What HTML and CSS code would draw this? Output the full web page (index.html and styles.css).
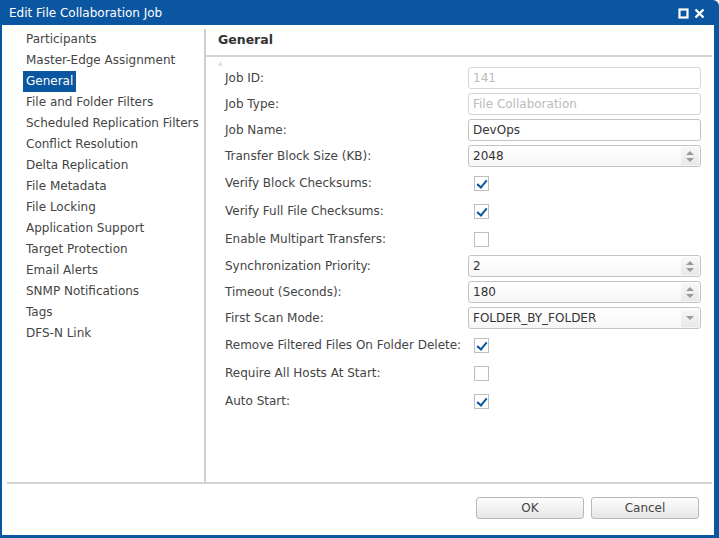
FILE: index.html
```html
<!DOCTYPE html>
<html lang="en">
<head>
    <meta charset="UTF-8">
    <title>Edit File Collaboration Job</title>
    <link rel="stylesheet" href="styles.css">
</head>
<body>
    <div class="window">
        <div class="titlebar">
            <span class="title">Edit File Collaboration Job</span>
            <span class="tools">
                <svg width="11" height="11" viewBox="0 0 11 11"><rect x="1.5" y="1.5" width="8" height="8" fill="none" stroke="#fff" stroke-width="2.2"/></svg>
                <svg width="11" height="11" viewBox="0 0 11 11"><path d="M1.5 1.5 L9.5 9.5 M9.5 1.5 L1.5 9.5" stroke="#fff" stroke-width="2.4"/></svg>
            </span>
        </div>

        <div class="body">
            <div class="main">
                <ul class="nav">
                    <li>Participants</li>
                    <li>Master-Edge Assignment</li>
                    <li class="active">General</li>
                    <li>File and Folder Filters</li>
                    <li>Scheduled Replication Filters</li>
                    <li>Conflict Resolution</li>
                    <li>Delta Replication</li>
                    <li>File Metadata</li>
                    <li>File Locking</li>
                    <li>Application Support</li>
                    <li>Target Protection</li>
                    <li>Email Alerts</li>
                    <li>SNMP Notifications</li>
                    <li>Tags</li>
                    <li>DFS-N Link</li>
                </ul>

                <div class="panel">
                    <div class="panel-head">General</div>
                    <div class="form">
                        <span class="ghost">&#9650;</span>
                        <div class="row"><label>Job ID:</label><div class="field disabled">141</div></div>
                        <div class="row"><label>Job Type:</label><div class="field disabled">File Collaboration</div></div>
                        <div class="row"><label>Job Name:</label><div class="field">DevOps</div></div>
                        <div class="row"><label>Transfer Block Size (KB):</label><div class="field spin">2048<span class="arrows"><i class="up"></i><i class="down"></i></span></div></div>
                        <div class="row check-row"><label>Verify Block Checksums:</label><span class="check on"></span></div>
                        <div class="row check-row"><label>Verify Full File Checksums:</label><span class="check on"></span></div>
                        <div class="row check-row"><label>Enable Multipart Transfers:</label><span class="check"></span></div>
                        <div class="row"><label>Synchronization Priority:</label><div class="field spin">2<span class="arrows"><i class="up"></i><i class="down"></i></span></div></div>
                        <div class="row"><label>Timeout (Seconds):</label><div class="field spin">180<span class="arrows"><i class="up"></i><i class="down"></i></span></div></div>
                        <div class="row"><label>First Scan Mode:</label><div class="field select">FOLDER_BY_FOLDER<span class="arrows"><i class="down"></i></span></div></div>
                        <div class="row check-row"><label>Remove Filtered Files On Folder Delete:</label><span class="check on"></span></div>
                        <div class="row check-row"><label>Require All Hosts At Start:</label><span class="check"></span></div>
                        <div class="row check-row"><label>Auto Start:</label><span class="check on"></span></div>
                    </div>
                </div>
            </div>

            <div class="footer">
                <button class="btn">OK</button>
                <button class="btn">Cancel</button>
            </div>
        </div>
    </div>
</body>
</html>
```

FILE: styles.css
```css
* {
    box-sizing: border-box;
}
html, body {
    margin: 0;
    padding: 0;
}
body {
    font-family: "DejaVu Sans", Verdana, sans-serif;
    font-size: 12px;
    color: #444;
    background: #fff;
}
.window {
    width: 719px;
    height: 538px;
    background: #0b56a0;
    border-radius: 0 6px 0 0;
    display: flex;
    flex-direction: column;
    padding: 0 5px 3px 2px;
}
.titlebar {
    height: 25px;
    display: flex;
    align-items: center;
    justify-content: space-between;
    padding: 0 9px 0 7px;
    color: #fff;
}
.title {
    font-size: 12px;
}
.tools {
    display: flex;
    gap: 5px;
    padding-top: 1px;
}
.body {
    flex: 1;
    background: #fff;
    display: flex;
    flex-direction: column;
    padding: 0 2px 0 5px;
}
.main {
    flex: 1;
    display: flex;
    border-bottom: 2px solid #d4d4d4;
    padding-top: 4px;
}
.nav {
    list-style: none;
    margin: 0;
    padding: 0 0 0 16px;
    width: 199px;
    border-right: 2px solid #d0d0d0;
}
.nav li {
    height: 21px;
    line-height: 21px;
    padding: 0 3px;
    white-space: nowrap;
    width: max-content;
}
.nav li.active {
    background: #0b56a0;
    color: #fff;
}
.panel {
    flex: 1;
    display: flex;
    flex-direction: column;
}
.panel-head {
    height: 28px;
    line-height: 22px;
    padding-left: 12px;
    font-weight: bold;
    font-size: 12.5px;
    color: #333;
    border-bottom: 2px solid #d4d4d4;
}
.form {
    position: relative;
    padding: 8px 0 0 19px;
}
.ghost {
    position: absolute;
    left: 12px;
    top: 2px;
    font-size: 6px;
    color: #ddd;
}
.row {
    display: flex;
    align-items: center;
    height: 26px;
}
.check-row {
    height: 28px;
}
.row label {
    width: 243px;
    white-space: nowrap;
}
.field {
    position: relative;
    width: 233px;
    height: 22px;
    line-height: 20px;
    border: 1px solid #c4c4c4;
    border-radius: 3px;
    padding: 0 4px;
    color: #333;
    background: #fff;
}
.field.disabled {
    color: #bbb;
    border-color: #d6d6d6;
}
.spin, .select {
    background: linear-gradient(#fff, #f6f6f6);
}
.arrows {
    position: absolute;
    right: 1px;
    top: 1px;
    bottom: 1px;
    width: 18px;
    display: flex;
    flex-direction: column;
    align-items: center;
    justify-content: center;
    gap: 3px;
    background: linear-gradient(#f8f8f8, #e8e8e8);
    border-radius: 0 2px 2px 0;
}
.arrows i {
    width: 0;
    height: 0;
    border-left: 4px solid transparent;
    border-right: 4px solid transparent;
}
.arrows .up {
    border-bottom: 4px solid #999;
}
.arrows .down {
    border-top: 4px solid #999;
}
.check {
    width: 15px;
    height: 15px;
    border: 1px solid #bdbdbd;
    margin-left: 6px;
    position: relative;
    background: #fff;
}
.check.on::after {
    content: "";
    position: absolute;
    left: 4px;
    top: 1px;
    width: 4px;
    height: 8px;
    border: solid #0b56a0;
    border-width: 0 2.5px 2.5px 0;
    transform: rotate(40deg);
}
.footer {
    height: 51px;
    display: flex;
    justify-content: flex-end;
    align-items: center;
    gap: 7px;
    padding-right: 13px;
    padding-bottom: 3px;
}
.btn {
    width: 108px;
    height: 22px;
    font-family: "DejaVu Sans", Verdana, sans-serif;
    font-size: 12px;
    color: #444;
    border: 1px solid #b8b8b8;
    border-radius: 3px;
    background: linear-gradient(#fdfdfd, #e6e6e6);
}
```
